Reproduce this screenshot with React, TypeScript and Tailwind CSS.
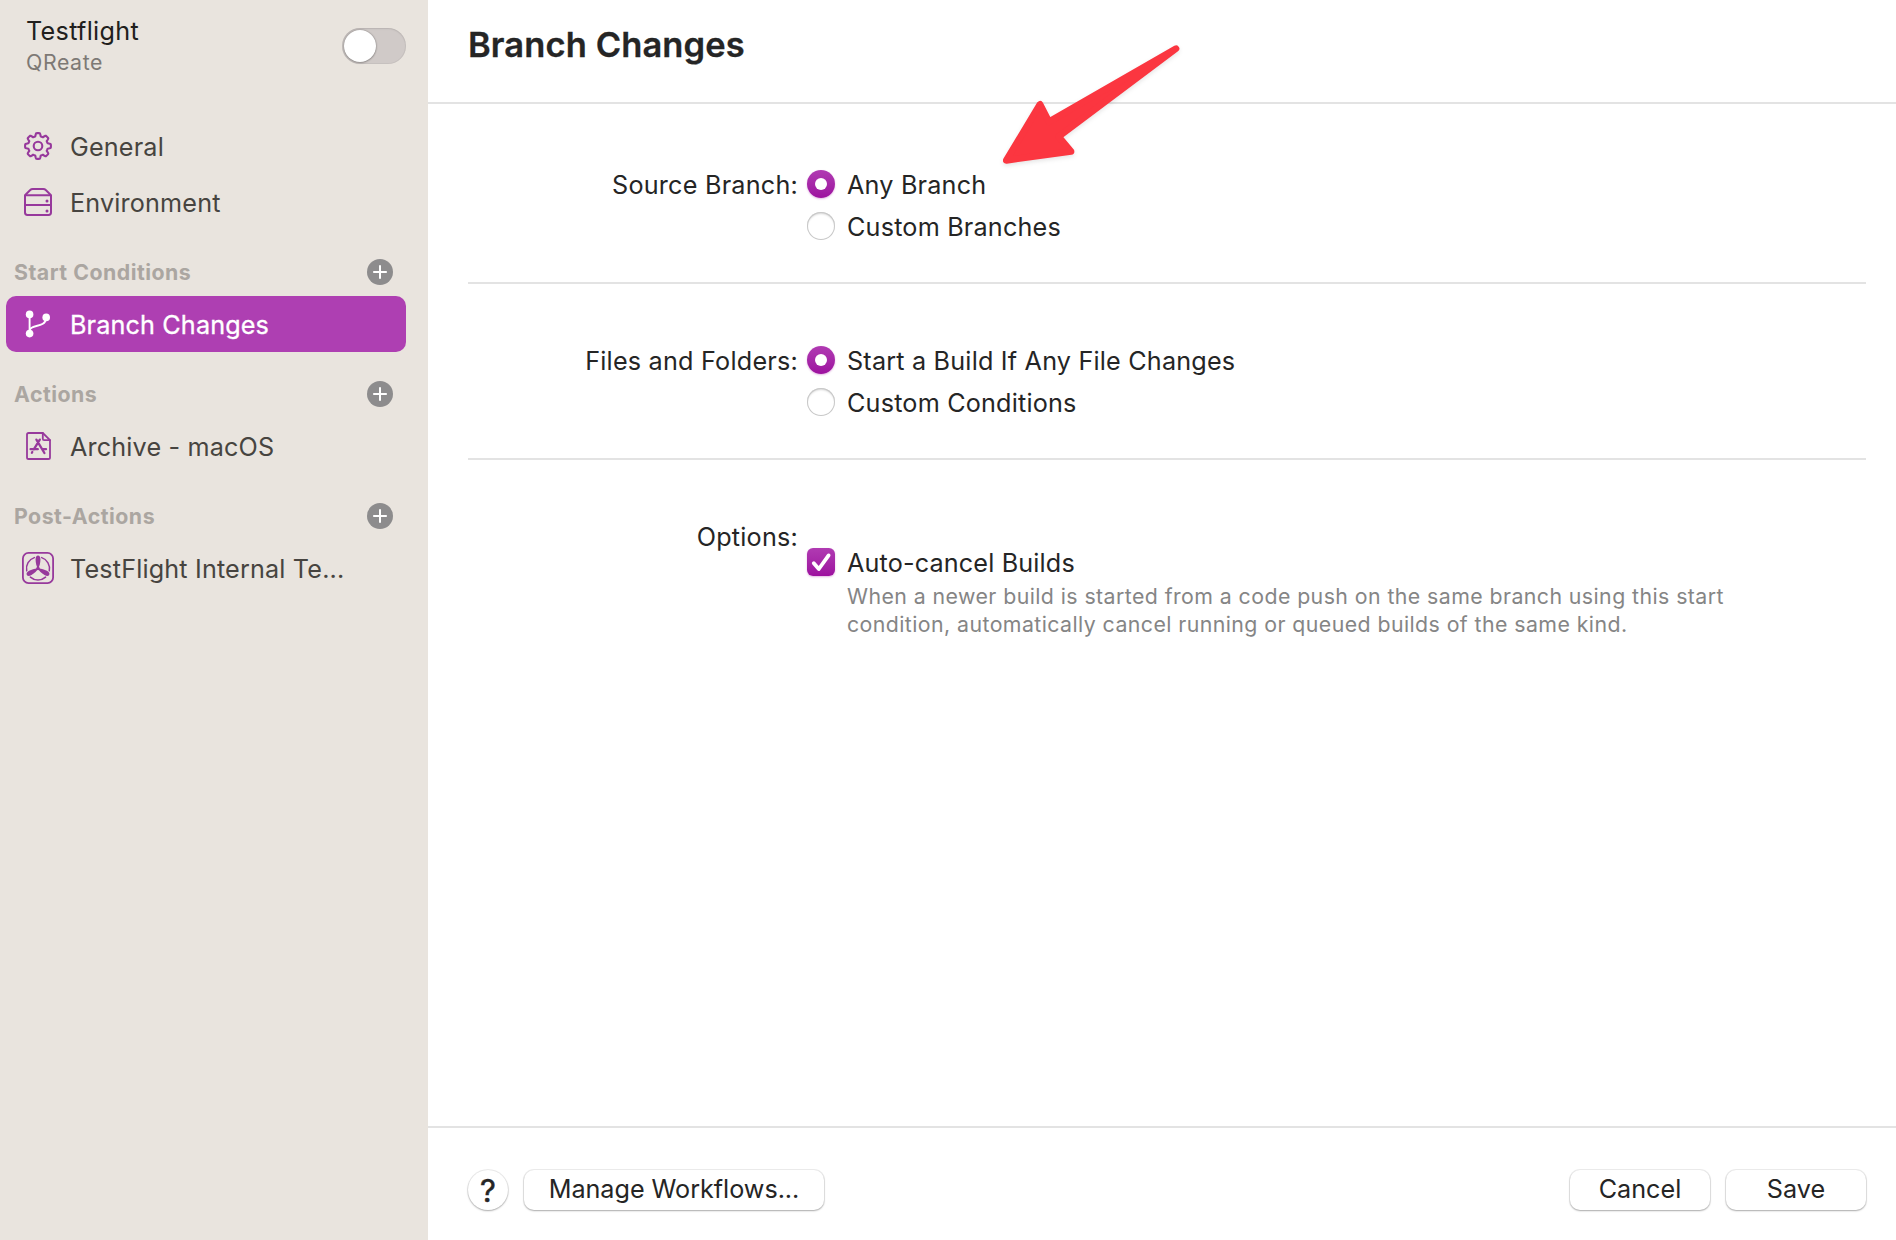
import React from "react";

type Children = { children: React.ReactNode };

function gearPath() {
  const steps = 160;
  let d = "";
  for (let i = 0; i < steps; i++) {
    const a = (i / steps) * Math.PI * 2;
    const wave = Math.max(-1, Math.min(1, Math.cos(8 * a) * 2 + 0.25));
    const r = 11.4 + 1.5 * wave;
    d += `${i ? "L" : "M"}${(16 + r * Math.sin(a)).toFixed(2)} ${(16 - r * Math.cos(a)).toFixed(2)}`;
  }
  return d + "Z";
}

function GearIcon() {
  return (
    <svg viewBox="0 0 32 32" className="size-8" fill="none" stroke="currentColor" strokeWidth="2.1" strokeLinejoin="round">
      <path d={gearPath()} />
      <circle cx="16" cy="16" r="4.3" />
    </svg>
  );
}

function ServerIcon() {
  return (
    <svg viewBox="0 0 32 32" className="size-8" fill="none" stroke="currentColor" strokeWidth="2" strokeLinejoin="round">
      <path d="M3 9.2 8 4.2Q9.2 3 10.8 3H21.2Q22.8 3 24 4.2L29 9.2V26.6Q29 29 26.6 29H5.4Q3 29 3 26.6Z" />
      <path d="M3 9.2H29M3 19.1H29" />
      <circle cx="25" cy="15" r="1.5" fill="currentColor" stroke="none" />
      <circle cx="25" cy="25" r="1.5" fill="currentColor" stroke="none" />
    </svg>
  );
}

function BranchIcon() {
  return (
    <svg viewBox="0 0 32 32" className="size-8" fill="none" stroke="currentColor" strokeWidth="1.9">
      <path d="M7.6 6.4V26" />
      <path d="M7.6 22.5C8.2 15.6 23.6 20.8 24.2 9.6" />
      <circle cx="7.6" cy="6.4" r="3.8" fill="currentColor" stroke="none" />
      <circle cx="7.6" cy="25.6" r="3.8" fill="currentColor" stroke="none" />
      <circle cx="24.2" cy="9.4" r="3.8" fill="currentColor" stroke="none" />
    </svg>
  );
}

function AppDocumentIcon() {
  return (
    <svg viewBox="0 0 32 32" className="size-8" fill="none" stroke="currentColor" strokeLinejoin="round" strokeLinecap="round">
      <path strokeWidth="1.8" d="M6.6 3H20.8L28 10.2V27.4Q28 29 26.4 29H6.6Q5 29 5 27.4V4.6Q5 3 6.6 3Z" />
      <path strokeWidth="1.8" d="M20.8 3V8.8Q20.8 10.2 22.2 10.2H28" />
      <path strokeWidth="2.3" d="M14.4 9.6 22.4 23M17.8 9.6 11.8 19.4M10.3 22 9.9 22.7M8.6 19.2H15.8M20.8 19.2H24" />
    </svg>
  );
}

function PropellerIcon() {
  return (
    <svg viewBox="0 0 32 32" className="size-8" fill="none" stroke="currentColor">
      <rect x="0.9" y="0.9" width="30.2" height="30.2" rx="5.6" strokeWidth="1.8" />
      {[0, 120, 240].map((angle) => (
        <g key={angle} transform={`rotate(${angle} 16 16.5)`}>
          <path fill="currentColor" stroke="none" d="M16 16.5C14.4 14.6 13.6 11 13.6 7.6 13.6 5 14.5 3.6 16 3.6S18.4 5 18.4 7.6C18.4 11 17.6 14.6 16 16.5Z" />
          <path strokeWidth="1.5" strokeLinecap="round" d="M19.7 5.6A11.5 11.5 0 0 1 27.27 18.8" />
        </g>
      ))}
      <circle cx="16" cy="16.5" r="1.8" fill="currentColor" stroke="none" />
    </svg>
  );
}

function NavItem({ icon, selected, children }: Children & { icon: React.ReactNode; selected?: boolean }) {
  return (
    <div
      className={
        selected
          ? "ml-1.5 flex h-14 w-[400px] items-center rounded-[10px] bg-[#ae3fb2] pl-4 text-white"
          : "ml-1.5 flex h-14 w-[400px] items-center pl-4 text-[#97399c]"
      }
    >
      {icon}
      <span
        className={
          selected
            ? "ml-4 pt-0.5 text-[25.2px] leading-[30px] tracking-[0.14px] text-white [-webkit-text-stroke:0.3px_white]"
            : "ml-4 pt-0.5 text-[25.2px] leading-[30px] tracking-[0.16px] text-[#474440]"
        }
      >
        {children}
      </span>
    </div>
  );
}

function NavHeading({ children }: Children) {
  return (
    <div className="flex h-12 items-center justify-between pr-[35px] pl-3.5">
      <span className="text-[21.3px] leading-[26px] font-bold tracking-[0.5px] text-[#aba6a1]">{children}</span>
      <svg viewBox="0 0 26 26" className="size-[26px]">
        <circle cx="13" cy="13" r="13" fill="#8d8c8d" />
        <path d="M13 6.2V19.8M6.2 13H19.8" stroke="#fff" strokeWidth="2" />
      </svg>
    </div>
  );
}

function Radio({ checked, children }: Children & { checked?: boolean }) {
  return (
    <div className="flex h-[42px] items-center gap-3">
      {checked ? (
        <span className="flex size-7 items-center justify-center rounded-full bg-linear-to-b from-[#b03ab2] to-[#9d0f9f] shadow-[0_1px_2px_rgba(160,20,160,0.3)]">
          <span className="size-3 rounded-full bg-white" />
        </span>
      ) : (
        <span className="size-7 rounded-full bg-white shadow-[inset_0_0_0_1px_#c8c8c8,inset_0_2px_2px_rgba(0,0,0,0.16)]" />
      )}
      <span className="pt-0.5 text-[25.2px] leading-[30px] tracking-[0.19px]">{children}</span>
    </div>
  );
}

function FieldLabel({ children }: Children) {
  return (
    <div className="mr-px flex h-[42px] w-[330px] items-center justify-end pt-0.5 text-[25.2px] leading-[30px] tracking-[0.22px]">
      {children}
    </div>
  );
}

function PushButton({ className, children }: Children & { className: string }) {
  return (
    <button
      className={`flex h-10 items-center justify-center rounded-[10px] bg-white pb-0.5 text-[25.2px] leading-[30px] shadow-[0_0_0_1px_rgba(0,0,0,0.07),0_1px_2px_rgba(0,0,0,0.28)] ${className}`}
    >
      {children}
    </button>
  );
}

function Sidebar() {
  return (
    <aside className="w-[428px] shrink-0 bg-[#e9e4de]">
      <div className="flex h-[118px] justify-between pr-[22px] pl-[26px]">
        <div className="pt-4">
          <div className="text-[25.2px] leading-[30px] tracking-[0.3px] text-[#211f1d]">Testflight</div>
          <div className="text-[21.3px] leading-8 tracking-[0.6px] text-[#7d7975]">QReate</div>
        </div>
        <div className="mt-7 flex h-9 w-16 items-center rounded-full bg-[#d0cac8] pl-0.5 shadow-[inset_0_0_0_1px_rgba(0,0,0,0.04),inset_0_1px_2px_rgba(0,0,0,0.08)]">
          <span className="size-8 rounded-full bg-white shadow-[0_0_2px_rgba(0,0,0,0.4),0_1px_2px_rgba(0,0,0,0.2)]" />
        </div>
      </div>
      <nav className="flex flex-col gap-[18px]">
        <div>
          <NavItem icon={<GearIcon />}>General</NavItem>
          <NavItem icon={<ServerIcon />}>Environment</NavItem>
        </div>
        <div>
          <NavHeading>Start Conditions</NavHeading>
          <NavItem icon={<BranchIcon />} selected>
            Branch Changes
          </NavItem>
        </div>
        <div>
          <NavHeading>Actions</NavHeading>
          <NavItem icon={<AppDocumentIcon />}>Archive - macOS</NavItem>
        </div>
        <div>
          <NavHeading>Post-Actions</NavHeading>
          <NavItem icon={<PropellerIcon />}>TestFlight Internal Te...</NavItem>
        </div>
      </nav>
    </aside>
  );
}

export default function App() {
  return (
    <div className="relative flex h-[1240px] w-[1896px] overflow-hidden bg-white font-[Inter,sans-serif] text-[#252525]">
      <Sidebar />
      <main className="flex flex-1 flex-col">
        <header className="h-[104px] border-b-2 border-[#e3e3e3] pt-[23px] pl-10">
          <h1 className="text-[34.5px] leading-[44px] font-semibold tracking-[0.1px] [-webkit-text-stroke:0.3px_#252525]">Branch Changes</h1>
        </header>

        <div className="flex-1 pr-[30px] pl-10">
          <section className="flex gap-2 border-b-2 border-[#e3e3e3] pt-[59px] pb-[35px]">
            <FieldLabel>Source Branch:</FieldLabel>
            <div>
              <Radio checked>Any Branch</Radio>
              <Radio>Custom Branches</Radio>
            </div>
          </section>
          <section className="flex gap-2 border-b-2 border-[#e3e3e3] pt-[55px] pb-[35px]">
            <FieldLabel>Files and Folders:</FieldLabel>
            <div>
              <Radio checked>Start a Build If Any File Changes</Radio>
              <Radio>Custom Conditions</Radio>
            </div>
          </section>
          <section className="flex gap-2 pt-[55px]">
            <FieldLabel>Options:</FieldLabel>
            <div className="pt-[27px]">
              <div className="flex h-10 items-center gap-3">
                <span className="flex size-7 items-center justify-center rounded-md bg-linear-to-b from-[#b03ab2] to-[#9d0f9f] shadow-[0_1px_2px_rgba(160,20,160,0.3)]">
                  <svg viewBox="0 0 28 28" className="size-7" fill="none" stroke="#fff" strokeWidth="3.8" strokeLinecap="round" strokeLinejoin="round">
                    <path d="M6.8 15.2 11.8 21 21.6 7.4" />
                  </svg>
                </span>
                <span className="pt-0.5 text-[25.2px] leading-[30px] tracking-[0.15px]">Auto-cancel Builds</span>
              </div>
              <p className="pl-10 text-[21.3px] leading-7 tracking-[0.43px] whitespace-nowrap text-[#858585]">
                When a newer build is started from a code push on the same branch using this start
                <br />
                condition, automatically cancel running or queued builds of the same kind.
              </p>
            </div>
          </section>
        </div>

        <footer className="flex h-[114px] items-center border-t-2 border-[#e3e3e3] pt-3 pr-[30px] pl-10">
          <button className="flex size-10 items-center justify-center rounded-full bg-white pt-0.5 text-[31px] leading-10 shadow-[0_0_0_1px_rgba(0,0,0,0.07),0_1px_2px_rgba(0,0,0,0.28)] [-webkit-text-stroke:0.5px_#252525]">
            ?
          </button>
          <PushButton className="ml-4 w-[300px] tracking-[-0.03px]">Manage Workflows...</PushButton>
          <PushButton className="ml-auto w-[140px]">Cancel</PushButton>
          <PushButton className="ml-4 w-[140px]">Save</PushButton>
        </footer>
      </main>

      <svg
        viewBox="0 0 600 450"
        className="absolute top-[30px] left-[990px] h-[150px] w-[200px] drop-shadow-[0_2px_2px_rgba(0,0,0,0.1)]"
        fill="#fb3640"
        stroke="#fb3640"
        strokeWidth="20"
        strokeLinejoin="round"
      >
        <path d="M558 56 177 275 150 223 49 391 243 364 206 320Z" />
      </svg>
    </div>
  );
}
